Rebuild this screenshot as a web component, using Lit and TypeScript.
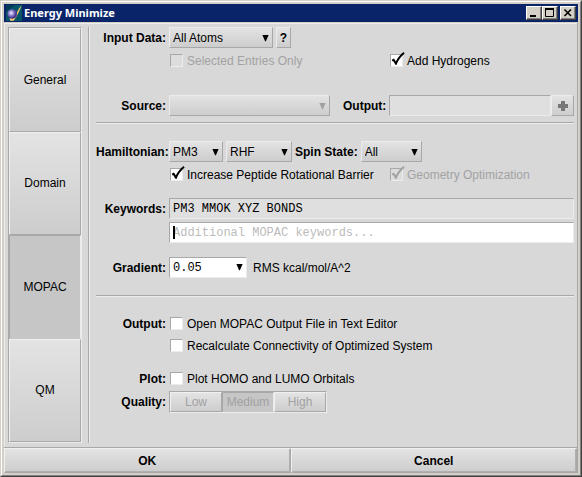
import { LitElement, html, css, svg, nothing } from "lit";
import { customElement, property, state } from "lit/decorators.js";
import { classMap } from "lit/directives/class-map.js";

const base = css`
  :host {
    font: 12px/16px "Liberation Sans", Arial, sans-serif;
    color: #000;
  }
  *, *::before, *::after { box-sizing: border-box; }
  button, select, input { font: inherit; color: inherit; margin: 0; border-radius: 0; outline: none; }
`;

@customElement("combo-box")
class ComboBox extends LitElement {
  @property() label = "";
  @property() value = "";
  @property({ type: Boolean }) disabled = false;
  @property({ type: Boolean }) field = false;

  static styles = [base, css`
    :host { display: inline-block; flex: none; }
    .wrap { position: relative; height: 21px; }
    select {
      appearance: none;
      display: block;
      width: 100%;
      height: 100%;
      padding: 0 16px 0 3px;
      border: 1px solid;
      border-color: #ececec #a8a8a8 #a8a8a8 #ececec;
      background: linear-gradient(#e3e3e3, #cdcdcd);
    }
    select:disabled { opacity: 1; }
    .field select {
      font-family: "Liberation Mono", monospace;
      background: #fff;
      border-color: #a8a8a8 #ececec #ececec #a8a8a8;
    }
    .arrow { position: absolute; right: 4px; top: 7px; width: 7px; height: 8px; pointer-events: none; }
    .field .arrow { top: 6px; }
    .off .arrow { fill: #a0a0a0; }
  `];

  render() {
    return html`<div class=${classMap({ wrap: true, field: this.field, off: this.disabled })}>
      <select aria-label=${this.label} ?disabled=${this.disabled}>
        <option>${this.value}</option>
      </select>
      <svg class="arrow" viewBox="0 0 7 8"><path d="M.4 1H6.6L3.9 7.2H3.1Z" /></svg>
    </div>`;
  }
}

@customElement("check-item")
class CheckItem extends LitElement {
  @property() label = "";
  @property({ type: Boolean }) checked = false;
  @property({ type: Boolean }) disabled = false;

  static styles = [base, css`
    :host { display: inline-block; }
    label { display: flex; align-items: center; height: 19px; padding-left: 1px; gap: 4px; white-space: nowrap; }
    .box { position: relative; width: 13px; height: 13px; flex: none; }
    input {
      appearance: none;
      display: block;
      width: 13px;
      height: 13px;
      background: #fff;
      border: 1px solid;
      border-color: #a8a8a8 #ececec #ececec #a8a8a8;
    }
    input:disabled { background: #dcdcdc; }
    .off { color: #a2a2a2; }
    .tick {
      position: absolute; left: 1px; bottom: 1px; width: 14px; height: 14px;
      fill: none; stroke: currentColor; pointer-events: none;
    }
  `];

  render() {
    return html`<label class=${classMap({ off: this.disabled })}>
      <span class="box">
        <input type="checkbox" .checked=${this.checked} ?disabled=${this.disabled}
          @change=${(e: Event) => (this.checked = (e.target as HTMLInputElement).checked)} />
        ${this.checked
          ? html`<svg class="tick" viewBox="0 0 14 14">
              <path d="M1.2 8.6L2.6 7.8L5 11.6" stroke-width="2" />
              <path d="M4.6 12.6C6 8.5 9.5 3.8 13 .8" stroke-width="2" />
            </svg>`
          : nothing}
      </span>
      <span>${this.label}</span>
    </label>`;
  }
}

@customElement("app-root")
class AppRoot extends LitElement {
  @state() tab = "MOPAC";

  static styles = [base, css`
    :host { display: block; }
    .window {
      display: flex;
      flex-direction: column;
      min-height: 100vh;
      border: 1px solid;
      border-color: #d4d0c8 #404040 #404040 #d4d0c8;
      background: #d8d8d8;
    }
    .frame {
      flex: 1;
      display: flex;
      flex-direction: column;
      border: 1px solid;
      border-color: #fff #808080 #808080 #fff;
      outline: 2px solid #d4d0c8;
      outline-offset: -3px;
      padding: 2px;
    }
    .title {
      display: flex;
      align-items: center;
      height: 18px;
      padding: 0 2px;
      background: #0a246a;
      color: #fff;
    }
    .logo { width: 16px; height: 16px; }
    h1 { flex: 1; margin: 0 0 0 2px; font: bold 11px/16px "Noto Sans", sans-serif; }
    .win {
      display: grid;
      place-items: center;
      width: 16px;
      height: 14px;
      padding: 0;
      border: 1px solid;
      border-color: #fff #404040 #404040 #fff;
      background: #d4d0c8;
      box-shadow: inset -1px -1px #808080;
    }
    .win svg { width: 14px; height: 12px; fill: none; stroke: #000; }
    .close { margin-left: 2px; }
    .client {
      flex: 1;
      display: flex;
      flex-direction: column;
      border-top: 1px solid #d4d0c8;
      border-right: 1px solid #a8a8a8;
    }
    .body { flex: 1; display: flex; padding: 3px 3px 4px 4px; border-top: 1px solid #ececec; border-left: 1px solid #ececec; }
    nav {
      display: flex;
      flex-direction: column;
      width: 74px;
      margin-left: -1px;
      border: 1px solid;
      border-color: #a8a8a8 #ececec #ececec #a8a8a8;
    }
    .tab, .seg button {
      padding: 0;
      border: 1px solid;
      border-color: #f0f0f0 #a8a8a8 #a8a8a8 #f0f0f0;
      background: linear-gradient(#e3e3e3, #cdcdcd);
    }
    .tab { flex: 1; }
    .tab.on, .seg .on { background: #c6c6c6; border-color: #a8a8a8 #ececec #c6c6c6 #a8a8a8; }
    .vrule { width: 2px; margin: 0 6px; background: linear-gradient(90deg, #a8a8a8 50%, #ececec 50%); }
    form { flex: 1; min-width: 0; display: flex; flex-direction: column; gap: 3px; }
    .row { display: flex; align-items: center; gap: 3px; }
    .key { width: 70px; flex: none; text-align: right; font-weight: bold; white-space: nowrap; }
    .spaced { margin-top: 11px; }
    .apart { margin-top: 22px; }
    hr { width: 100%; height: 2px; margin: 3px 0 14px; border: 0; background: linear-gradient(#a8a8a8 50%, #ececec 50%); }
    hr.low { margin-top: 14px; }
    .sub { font-weight: bold; white-space: nowrap; }
    .w54 { width: 54px; }
    .w61 { width: 61px; }
    .w66 { width: 66px; }
    .w78 { width: 78px; }
    .w104 { width: 104px; }
    .w161 { width: 161px; }
    .right { margin-left: 10px; }
    .wide { width: 217px; }
    .help, .plus {
      height: 21px;
      padding: 0;
      border: 1px solid;
      border-color: #ececec #a8a8a8 #a8a8a8 #ececec;
      background: linear-gradient(#e3e3e3, #cdcdcd);
      font-weight: bold;
    }
    .help { width: 15px; }
    .plus { width: 23px; flex: none; display: grid; place-items: center; }
    .plus svg { width: 12px; height: 12px; }
    .text {
      flex: 1;
      min-width: 0;
      height: 21px;
      padding: 0 3px;
      border: 1px solid;
      border-color: #a8a8a8 #ececec #ececec #a8a8a8;
      background: #dfdfdf;
    }
    .mono { font-family: "Liberation Mono", monospace; }
    .edit { background: #fff; }
    .edit::placeholder { color: #bcbcbc; opacity: 1; }
    .entry { position: relative; flex: 1; display: flex; }
    .caret { position: absolute; left: 4px; top: 4px; width: 2px; height: 13px; background: #000; }
    .pick { flex: 1; min-width: 0; display: flex; }
    .unit { margin-left: 3px; }
    .seg {
      display: flex;
      width: 158px;
      height: 22px;
      border: 1px solid;
      border-color: #a8a8a8 #ececec #ececec #a8a8a8;
    }
    .seg button { flex: 1; color: #a2a2a2; }
    footer { display: flex; height: 26px; border-top: 1px solid #a8a8a8; }
    footer button {
      flex: 1;
      border: 1px solid;
      border-color: #f0f0f0 #a8a8a8 #a8a8a8 #f0f0f0;
      box-shadow: inset -1px -1px #b0b0b0;
      background: linear-gradient(#e3e3e3, #cdcdcd);
      font-weight: bold;
    }
  `];

  winButton(name: string, cls: string, glyph: unknown) {
    return html`<button class="win ${cls}" aria-label=${name}><svg viewBox="0 0 14 12">${glyph}</svg></button>`;
  }

  render() {
    return html`<div class="window"><div class="frame">
      <header class="title">
        <svg class="logo" viewBox="0 0 16 16">
          <defs><radialGradient id="ball" cx=".4" cy=".4"><stop offset="0" stop-color="#fff" /><stop offset=".4" stop-color="#a49be0" /><stop offset="1" stop-color="#46348f" /></radialGradient></defs>
          <rect width="16" height="16" fill="#075568" />
          <path d="M0 0H9L0 7Z" fill="#023c55" />
          <path d="M15.5 .5C14 5 11.5 10 8 15.5L4.5 16L3.5 13L8.5 12.5C10.5 8 12.5 3.5 15.5 .5Z" fill="#f5ca6a" />
          <circle cx="6.2" cy="9" r="4.8" fill="url(#ball)" />
        </svg>
        <h1>Energy Minimize</h1>
        ${this.winButton("Minimize", "", svg`<path d="M3 9H9" stroke-width="2" />`)}
        ${this.winButton("Maximize", "", svg`<path d="M2 2H11" stroke-width="2" /><path d="M2.5 2V9.5H10.5V2" />`)}
        ${this.winButton("Close", "close", svg`<path d="M3.5 2.5L10 9M10 2.5L3.5 9" stroke-width="1.6" />`)}
      </header>
      <main class="client">
        <div class="body">
          <nav>
            ${["General", "Domain", "MOPAC", "QM"].map(
              (t) => html`<button class=${classMap({ tab: true, on: t === this.tab })} @click=${() => (this.tab = t)}>${t}</button>`
            )}
          </nav>
          <div class="vrule"></div>
          <form @submit=${(e: Event) => e.preventDefault()}>
            <div class="row">
              <span class="key">Input Data:</span>
              <combo-box class="w104" label="Input Data" value="All Atoms"></combo-box>
              <button type="button" class="help">?</button>
            </div>
            <div class="row">
              <span class="key"></span>
              <check-item class="wide" label="Selected Entries Only" disabled></check-item>
              <check-item label="Add Hydrogens" checked></check-item>
            </div>
            <div class="row apart">
              <span class="key">Source:</span>
              <combo-box class="w161" label="Source" disabled></combo-box>
              <label class="sub right" for="out">Output:</label>
              <div class="pick">
                <input id="out" class="text" disabled />
                <button type="button" class="plus" aria-label="Add" disabled>
                  <svg viewBox="0 0 12 12"><path d="M4 1H8V4H11V8H8V11H4V8H1V4H4Z" fill="#777" /></svg>
                </button>
              </div>
            </div>
            <hr />
            <div class="row">
              <span class="key">Hamiltonian:</span>
              <combo-box class="w54" label="Hamiltonian" value="PM3"></combo-box>
              <combo-box class="w66" label="Wavefunction" value="RHF"></combo-box>
              <span class="sub">Spin State:</span>
              <combo-box class="w61" label="Spin State" value="All"></combo-box>
            </div>
            <div class="row">
              <span class="key"></span>
              <check-item class="wide" label="Increase Peptide Rotational Barrier" checked></check-item>
              <check-item label="Geometry Optimization" checked disabled></check-item>
            </div>
            <div class="row spaced">
              <label class="key" for="kw">Keywords:</label>
              <input id="kw" class="text mono" readonly value="PM3 MMOK XYZ BONDS" />
            </div>
            <div class="row">
              <span class="key"></span>
              <div class="entry">
                <input class="text mono edit" aria-label="Additional keywords" placeholder="Additional MOPAC keywords..." />
                <span class="caret"></span>
              </div>
            </div>
            <div class="row spaced">
              <span class="key">Gradient:</span>
              <combo-box class="w78" label="Gradient" value="0.05" field></combo-box>
              <span class="unit">RMS kcal/mol/A^2</span>
            </div>
            <hr class="low" />
            <div class="row">
              <span class="key">Output:</span>
              <check-item label="Open MOPAC Output File in Text Editor"></check-item>
            </div>
            <div class="row">
              <span class="key"></span>
              <check-item label="Recalculate Connectivity of Optimized System"></check-item>
            </div>
            <div class="row spaced">
              <span class="key">Plot:</span>
              <check-item label="Plot HOMO and LUMO Orbitals"></check-item>
            </div>
            <div class="row">
              <span class="key">Quality:</span>
              <div class="seg">
                <button type="button" disabled>Low</button>
                <button type="button" class="on" disabled>Medium</button>
                <button type="button" disabled>High</button>
              </div>
            </div>
          </form>
        </div>
        <footer><button>OK</button><button>Cancel</button></footer>
      </main>
    </div></div>`;
  }
}
